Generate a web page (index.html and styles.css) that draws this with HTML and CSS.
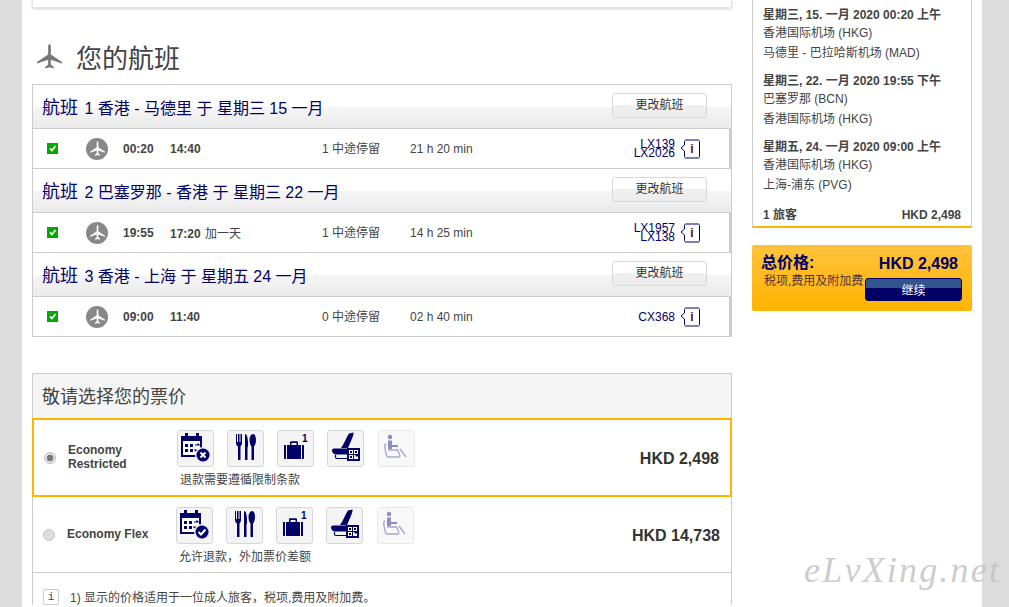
FILE: index.html
```html
<!DOCTYPE html>
<html lang="zh">
<head>
<meta charset="utf-8">
<title>您的航班</title>
<link rel="stylesheet" href="styles.css">
</head>
<body>
<svg class="defs" width="0" height="0" aria-hidden="true">
  <symbol id="plane" viewBox="0 0 24 24"><path d="M12 0c.8 0 1.300 1.300 1.300 3v7L24 17.300v1.500l-10.700-3.600v4.500l2.800 2.300V23.500L12 22.300 7.900 23.500V22l2.800-2.300v-4.500L0 18.800v-1.500L10.700 10V3c0-1.700.5-3 1.300-3z"/></symbol>
  <symbol id="cal" viewBox="0 0 37 37">
    <path fill="#006" d="M4 6h4V3h3v3h8V3h3v3h3v21H4z"/>
    <path fill="#fff" d="M6 11h17v14H6z"/>
    <path fill="#006" d="M8 14h3v3H8zM13 14h3v3h-3zM8 19h3v3H8zM13 19h3v3h-3z"/>
    <path fill="none" stroke="#006" stroke-width="1.200" d="M18 15h4l-1.500-1.500M22 20h-4l1.500 1.500"/>
  </symbol>
  <symbol id="fork" viewBox="0 0 37 37">
    <path fill="#006" d="M9 4h1v8h1V4h1.500v8h1V4H15v9c0 2-1 3-1.500 3.500V30h-2.500V16.500C10 16 9 15 9 13zM18 4c2 0 3 4 3 10v3h-.5V30H18zM26 4c2 0 3 3 3 6s-1 5.500-2 6.500V30h-2.500V16.500c-1-1-2-3.500-2-6.500s1.500-6 3.500-6z"/>
  </symbol>
  <symbol id="bag" viewBox="0 0 37 37">
    <path fill="#006" d="M7 15h2v14H8c-1 0-1-.5-1-1zM10 15h3v-2.500c0-.8.5-1.200 1.200-1.200h5.600c.7 0 1.200.4 1.200 1.200V15h3v14H10zM14.500 15h5v-2h-5zM25 15h1c1 0 1 .5 1 1v12c0 .5 0 1-1 1h-1z"/>
  </symbol>
  <symbol id="seat" viewBox="0 0 37 37">
    <path fill="#006" d="M22 3.500l4.500-1C27 5 24 11 21 18h-7c3-4 5-10 8-14.500zM7 18.500h13v6H9c-2.500 0-4-2.500-4-4 0-1.200 1-2 2-2z"/>
    <path fill="none" stroke="#006" stroke-width="1.200" d="M8.500 25v2c0 1 .5 1.500 1.500 1.500h10"/>
    <path fill="#006" d="M20 18h13v13H20z"/>
    <path fill="#fff" d="M22 20h4v4h-4zM27 20h4v4h-4zM22 25h4v4h-4zM27 25h1.500v1.500H31V29h-4z"/>
    <path fill="#006" d="M23 21h2v2h-2zM28 21h2v2h-2zM23 26h2v2h-2z"/>
  </symbol>
  <symbol id="chair" viewBox="0 0 37 37">
    <circle cx="12" cy="7" r="2.200" fill="#8d8dc4"/>
    <path fill="#8d8dc4" d="M10 10.500h4V15h6v2h-6v2h-4z"/>
    <path fill="none" stroke="#a5a5d2" stroke-width="1.300" d="M8 13.500c-1.500 1-1.500 3-1 5l1.500 7c.2 1 1 1.500 2 1.500h10c1.500 0 1.500-1.500 1-2.500L19.500 20H10M22 19l6 8"/>
  </symbol>
</svg>

<div class="page">
  <main class="main">
    <div class="top-card"></div>
    <h1 class="page-title">
      <svg class="title-plane"><use href="#plane"/></svg>
      <span>您的航班</span>
    </h1>

    <section class="flights">
      <div class="flight-head">
        <h2 class="flight-title"><span class="flight-no">航班</span> 1 香港 - 马德里 于 星期三 15 一月</h2>
        <button class="change-btn">更改航班</button>
      </div>
      <div class="flight-row">
        <span class="check"><svg viewBox="0 0 11 11"><path d="M3 5.500l2 2 3.500-4.500" fill="none" stroke="#fff" stroke-width="1.800"/></svg></span>
        <span class="carrier"><svg><use href="#plane"/></svg></span>
        <b class="time">00:20</b>
        <span><b class="time">14:40</b></span>
        <span class="cell">1 中途停留</span>
        <span class="cell">21 h 20 min</span>
        <span class="numbers"><span>LX139</span><span>LX2026</span></span>
        <span class="info"><svg viewBox="0 0 20 20"><path d="M4.500 6V2.500c0-1 .7-1.500 1.500-1.500h12c.8 0 1.500.5 1.500 1.500v15c0 1-.7 1.500-1.500 1.500H6c-.8 0-1.500-.5-1.500-1.500V12L1 9z" fill="#fff" stroke="#006"/></svg><b>i</b></span>
      </div>

      <div class="flight-head">
        <h2 class="flight-title"><span class="flight-no">航班</span> 2 巴塞罗那 - 香港 于 星期三 22 一月</h2>
        <button class="change-btn">更改航班</button>
      </div>
      <div class="flight-row">
        <span class="check"><svg viewBox="0 0 11 11"><path d="M3 5.500l2 2 3.500-4.500" fill="none" stroke="#fff" stroke-width="1.800"/></svg></span>
        <span class="carrier"><svg><use href="#plane"/></svg></span>
        <b class="time">19:55</b>
        <span><b class="time">17:20</b> <span class="next-day">加一天</span></span>
        <span class="cell">1 中途停留</span>
        <span class="cell">14 h 25 min</span>
        <span class="numbers"><span>LX1957</span><span>LX138</span></span>
        <span class="info"><svg viewBox="0 0 20 20"><path d="M4.500 6V2.500c0-1 .7-1.500 1.500-1.500h12c.8 0 1.500.5 1.500 1.500v15c0 1-.7 1.500-1.500 1.500H6c-.8 0-1.500-.5-1.500-1.500V12L1 9z" fill="#fff" stroke="#006"/></svg><b>i</b></span>
      </div>

      <div class="flight-head">
        <h2 class="flight-title"><span class="flight-no">航班</span> 3 香港 - 上海 于 星期五 24 一月</h2>
        <button class="change-btn">更改航班</button>
      </div>
      <div class="flight-row">
        <span class="check"><svg viewBox="0 0 11 11"><path d="M3 5.500l2 2 3.500-4.500" fill="none" stroke="#fff" stroke-width="1.800"/></svg></span>
        <span class="carrier"><svg><use href="#plane"/></svg></span>
        <b class="time">09:00</b>
        <span><b class="time">11:40</b></span>
        <span class="cell">0 中途停留</span>
        <span class="cell">02 h 40 min</span>
        <span class="numbers numbers-single"><span>CX368</span></span>
        <span class="info"><svg viewBox="0 0 20 20"><path d="M4.500 6V2.500c0-1 .7-1.500 1.500-1.500h12c.8 0 1.500.5 1.500 1.500v15c0 1-.7 1.500-1.500 1.500H6c-.8 0-1.500-.5-1.500-1.500V12L1 9z" fill="#fff" stroke="#006"/></svg><b>i</b></span>
      </div>
    </section>

    <section class="fares">
      <h2 class="fares-title">敬请选择您的票价</h2>
      <div class="fare fare-selected">
        <span class="radio radio-on"></span>
        <span class="fare-name">Economy<br>Restricted</span>
        <div class="fare-body">
          <div class="tiles">
            <span class="tile"><svg><use href="#cal"/></svg><svg class="badge" viewBox="0 0 16 16"><circle cx="8" cy="8" r="8" fill="#e8e8f0"/><circle cx="8" cy="8" r="6.500" fill="#006"/><path d="M5.500 5.500l5 5M10.500 5.500l-5 5" stroke="#fff" stroke-width="2"/></svg></span>
            <span class="tile"><svg><use href="#fork"/></svg></span>
            <span class="tile"><svg><use href="#bag"/></svg><span class="bag-num">1</span></span>
            <span class="tile"><svg><use href="#seat"/></svg></span>
            <span class="tile tile-off"><svg><use href="#chair"/></svg></span>
          </div>
          <p class="fare-note">退款需要遵循限制条款</p>
        </div>
        <strong class="fare-price">HKD 2,498</strong>
      </div>
      <div class="fare fare-plain">
        <span class="radio"></span>
        <span class="fare-name">Economy Flex</span>
        <div class="fare-body">
          <div class="tiles">
            <span class="tile"><svg><use href="#cal"/></svg><svg class="badge" viewBox="0 0 16 16"><circle cx="8" cy="8" r="8" fill="#e8e8f0"/><circle cx="8" cy="8" r="6.500" fill="#006"/><path d="M4.500 8l2.500 2.500 4.500-5" fill="none" stroke="#fff" stroke-width="2"/></svg></span>
            <span class="tile"><svg><use href="#fork"/></svg></span>
            <span class="tile"><svg><use href="#bag"/></svg><span class="bag-num">1</span></span>
            <span class="tile"><svg><use href="#seat"/></svg></span>
            <span class="tile tile-off"><svg><use href="#chair"/></svg></span>
          </div>
          <p class="fare-note">允许退款，外加票价差额</p>
        </div>
        <strong class="fare-price">HKD 14,738</strong>
      </div>
      <div class="footnote">
        <span class="foot-i">i</span>
        <span>1) 显示的价格适用于一位成人旅客，税项,费用及附加费。</span>
      </div>
    </section>
  </main>

  <aside class="side">
    <div class="summary">
      <div class="leg">
        <b>星期三, 15. 一月 2020 00:20 上午</b>
        <span class="from">香港国际机场 (HKG)</span>
        <span>马德里 - 巴拉哈斯机场 (MAD)</span>
      </div>
      <div class="leg">
        <b>星期三, 22. 一月 2020 19:55 下午</b>
        <span class="from">巴塞罗那 (BCN)</span>
        <span>香港国际机场 (HKG)</span>
      </div>
      <div class="leg">
        <b>星期五, 24. 一月 2020 09:00 上午</b>
        <span class="from">香港国际机场 (HKG)</span>
        <span>上海-浦东 (PVG)</span>
      </div>
      <div class="summary-foot"><b>1 旅客</b><b class="summary-price">HKD 2,498</b></div>
    </div>
    <div class="total">
      <div class="total-left">
        <b class="total-label">总价格:</b>
        <span class="total-sub">税项,费用及附加费</span>
      </div>
      <div class="total-right">
        <b class="total-price">HKD 2,498</b>
        <button class="continue">继续</button>
      </div>
    </div>
  </aside>
</div>
<div class="watermark">eLvXing.net</div>
</body>
</html>
```

FILE: styles.css
```css
html, body {
  margin: 0;
  height: 607px;
  overflow: hidden;
}
body {
  background: #dcdcdc;
  font-family: "Liberation Sans", "Noto Sans CJK SC", sans-serif;
  font-size: 12px;
  color: #444;
}
.defs { position: absolute; }
.page {
  width: 960px;
  height: 607px;
  margin-left: 22px;
  padding: 0 10px;
  box-sizing: border-box;
  background: #fff;
  display: flex;
  gap: 20px;
}
.main { width: 700px; flex: none; }
.top-card {
  height: 8px;
  border: 1px solid #e4e4e4;
  border-top: 0;
  box-sizing: border-box;
  box-shadow: 0 1px 3px rgba(0,0,0,.18);
}
.page-title {
  margin: 0;
  height: 76px;
  display: flex;
  align-items: center;
  gap: 14px;
  padding: 20px 0 0 5px;
  box-sizing: border-box;
  font-size: 26px;
  font-weight: 400;
  color: #444;
}
.title-plane { width: 25px; height: 27px; fill: #777; }

.flights {
  border: 1px solid #ccc;
  border-bottom: 0;
  border-top: 0;
}
.flight-head {
  height: 45px;
  box-sizing: border-box;
  border-top: 1px solid #ccc;
  border-bottom: 1px solid #ccc;
  display: flex;
  align-items: flex-start;
  justify-content: space-between;
  padding: 8px 24px 0 9px;
  background: linear-gradient(#fff 0, #fff 22px, #f5f5f5 22px, #ebebeb 100%);
}
.flight-title {
  margin: 0;
  font-size: 16px;
  font-weight: 400;
  color: #006;
  line-height: 30px;
}
.flight-no { font-size: 18px; margin-right: 2px; }
.change-btn {
  width: 95px;
  height: 25px;
  padding: 0 0 5px;
  border: 1px solid #d8d8d8;
  border-radius: 3px;
  background: linear-gradient(#fff 0, #fff 50%, #f0f0f0 50%, #ececec 100%);
  font: 12px "Liberation Sans", "Noto Sans CJK SC", sans-serif;
  color: #333;
}
.flight-row {
  height: 39px;
  border-right: 2px solid #ccc;
  display: grid;
  grid-template-columns: 53px 37px 47px 152px 88px 1fr auto 49px;
  align-items: center;
  box-sizing: border-box;
}
.flight-row > .check { margin-left: 14px; }
.check {
  width: 11px;
  height: 11px;
  background: #0a0;
  display: block;
}
.check svg { display: block; width: 11px; height: 11px; }
.carrier {
  width: 22px;
  height: 22px;
  border-radius: 50%;
  background: #888;
  display: flex;
  align-items: center;
  justify-content: center;
}
.carrier svg { width: 15px; height: 15px; fill: #fff; }
.time { font-weight: 700; color: #444; }
.next-day { margin-left: 1px; }
.cell { line-height: 14px; }
.numbers {
  display: flex;
  flex-direction: column;
  align-items: flex-end;
  color: #006;
  line-height: 9px;
  padding-right: 5px;
}
.numbers-single { line-height: 14px; }
.info {
  width: 20px;
  height: 20px;
  position: relative;
  display: block;
  justify-self: start;
}
.info svg { display: block; width: 20px; height: 20px; }
.info b {
  position: absolute;
  left: 4px;
  right: 0;
  top: 3px;
  text-align: center;
  color: #602;
  font-size: 12px;
  line-height: 14px;
}
.flight-row:last-child { border-bottom: 1px solid #ccc; height: 40px; }

.fares {
  margin-top: 36px;
  border: 1px solid #ccc;
  border-bottom: 0;
}
.fares-title {
  margin: 0;
  height: 44px;
  padding-left: 9px;
  background: #f5f5f5;
  font-size: 18px;
  font-weight: 400;
  line-height: 47px;
  color: #444;
}
.fare {
  display: flex;
  align-items: flex-start;
  box-sizing: border-box;
}
.fare-selected {
  height: 79px;
  margin: 0 -1px;
  border: 2px solid #ffb400;
  padding: 10px 11px 0 10px;
}
.fare-plain {
  height: 76px;
  padding: 10px 11px 0 10px;
  border-bottom: 1px solid #ccc;
}
.radio {
  width: 12px;
  height: 12px;
  margin-top: 22px;
  border-radius: 50%;
  background: #ddd;
  border: 1px solid #c4c4c4;
  box-sizing: border-box;
  flex: none;
}
.radio-on { background: radial-gradient(circle, #777 0, #777 3px, #ddd 3.500px); }
.fare-name {
  width: 109px;
  margin-left: 12px;
  margin-top: 13px;
  flex: none;
  font-weight: 700;
  line-height: 14px;
  color: #444;
}
.fare-plain .fare-name { margin-top: 20px; }
.fare-body { flex: 1; }
.tiles { display: flex; gap: 13px; }
.tile {
  width: 37px;
  height: 37px;
  box-sizing: border-box;
  border: 1px solid #d6d6d6;
  border-radius: 3px;
  background: #f4f4f4;
  position: relative;
  display: block;
}
.tile svg { position: absolute; left: -1px; top: -1px; width: 37px; height: 37px; }
.tile .badge { left: 17px; top: 16px; width: 16px; height: 16px; }
.tile-off { background: #f8f8f8; border-color: #e8e8e8; margin-left: 1px; }
.bag-num {
  position: absolute;
  left: 24px;
  top: 2px;
  font-size: 10px;
  font-weight: 700;
  line-height: 12px;
  color: #006;
}
.fare-note { margin: 6px 0 0 3px; line-height: 14px; }
.fare-price {
  margin-top: 20px;
  font-size: 16px;
  line-height: 18px;
  color: #333;
}
.footnote {
  display: flex;
  align-items: center;
  gap: 11px;
  padding: 15px 0 0 10px;
}
.foot-i {
  width: 16px;
  height: 16px;
  box-sizing: border-box;
  border: 1px solid #ccc;
  border-radius: 2px;
  text-align: center;
  line-height: 14px;
  font-size: 11px;
  font-family: "Liberation Mono", monospace;
}

.side { width: 220px; flex: none; }
.summary {
  height: 228px;
  box-sizing: border-box;
  border: 1px solid #ccc;
  border-top: 0;
  border-bottom: 2px solid #ffb400;
  padding: 8px 10px 0 10px;
}
.leg {
  display: flex;
  flex-direction: column;
  height: 66px;
  line-height: 14px;
}
.leg b { color: #444; }
.leg .from { margin: 4px 0 6px; }
.summary-foot {
  display: flex;
  justify-content: space-between;
  padding-top: 2px;
  line-height: 14px;
}
.summary-price { color: #444; }
.total {
  margin-top: 17px;
  height: 66px;
  box-sizing: border-box;
  border-radius: 2px;
  background: linear-gradient(#ffc23c, #ffb400);
  padding: 8px 10px 0 9px;
  display: flex;
  justify-content: space-between;
}
.total-left { display: flex; flex-direction: column; }
.total-label { font-size: 16px; line-height: 20px; color: #006; }
.total-sub { margin: 1px 0 0 3px; line-height: 14px; color: #533; }
.total-right { display: flex; flex-direction: column; align-items: flex-end; width: 97px; }
.total-price { font-size: 16px; line-height: 20px; color: #006; margin: 0 4px 0 0; white-space: nowrap; padding-top: 1px; }
.continue {
  width: 97px;
  height: 23px;
  margin-top: 4px;
  padding: 0;
  border: 1px solid #006;
  border-radius: 3px;
  background: linear-gradient(#33558f 0, #33558f 45%, #006 45%, #006 100%);
  color: #fff;
  font: 12px "Liberation Sans", "Noto Sans CJK SC", sans-serif;
}
.watermark {
  position: absolute;
  left: 804px;
  top: 549px;
  font: italic 36px "Liberation Serif", serif;
  letter-spacing: 2.200px;
  color: rgba(195,195,195,.85);
  white-space: nowrap;
}
```
